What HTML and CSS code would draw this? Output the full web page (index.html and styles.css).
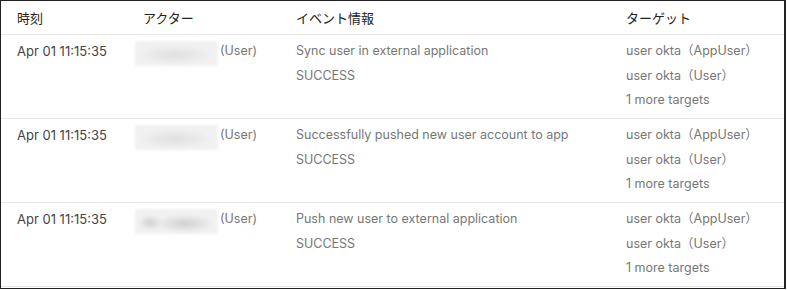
FILE: index.html
```html
<!DOCTYPE html>
<html lang="ja">
<head>
    <meta charset="UTF-8">
    <meta name="viewport" content="width=device-width, initial-scale=1.0">
    <link rel="stylesheet" href="styles.css">
    <title>イベントログ</title>
</head>
<body>
    <div class="log-table">
        <div class="log-row log-head">
            <div class="cell">時刻</div>
            <div class="cell">アクター</div>
            <div class="cell">イベント情報</div>
            <div class="cell">ターゲット</div>
        </div>

        <div class="log-row">
            <div class="cell time">Apr 01 11:15:35</div>
            <div class="cell actor">
                <span class="masked"></span>
                <span class="kind">(User)</span>
            </div>
            <div class="cell event">
                <div>Sync user in external application</div>
                <div>SUCCESS</div>
            </div>
            <div class="cell target">
                <div>user okta（AppUser）</div>
                <div>user okta（User）</div>
                <div>1 more targets</div>
            </div>
        </div>

        <div class="log-row">
            <div class="cell time">Apr 01 11:15:35</div>
            <div class="cell actor">
                <span class="masked"></span>
                <span class="kind">(User)</span>
            </div>
            <div class="cell event">
                <div>Successfully pushed new user account to app</div>
                <div>SUCCESS</div>
            </div>
            <div class="cell target">
                <div>user okta（AppUser）</div>
                <div>user okta（User）</div>
                <div>1 more targets</div>
            </div>
        </div>

        <div class="log-row">
            <div class="cell time">Apr 01 11:15:35</div>
            <div class="cell actor">
                <span class="masked strong"></span>
                <span class="kind">(User)</span>
            </div>
            <div class="cell event">
                <div>Push new user to external application</div>
                <div>SUCCESS</div>
            </div>
            <div class="cell target">
                <div>user okta（AppUser）</div>
                <div>user okta（User）</div>
                <div>1 more targets</div>
            </div>
        </div>
    </div>
</body>
</html>
```

FILE: styles.css
```css
body {
    margin: 0;
    background: #fff;
    font-family: Inter, "Noto Sans CJK JP", sans-serif;
    font-size: 13px;
    color: #333;
}

.log-table {
    box-sizing: border-box;
    width: 786px;
    height: 289px;
    border: 1px solid #222;
    border-right-width: 2px;
}

.log-row {
    display: grid;
    grid-template-columns: 126px 153px 330px 1fr;
    height: 83px;
    border-bottom: 1px solid #e6e6e6;
}

.log-head {
    height: 33px;
    align-items: center;
    color: #222;
}

.cell {
    padding-left: 16px;
}

.log-row:not(.log-head) .cell {
    padding-top: 4px;
    line-height: 24.5px;
}

.time {
    color: #444;
}

.actor {
    display: flex;
    align-items: flex-start;
}

/* blurred-out actor name */
.masked {
    display: inline-block;
    width: 83px;
    height: 25px;
    margin: 2px 2px 0 -8px;
    background:
        radial-gradient(ellipse 38px 10px at 48% 55%, rgba(215, 215, 215, 0.7), transparent),
        #f1f1f1;
    filter: blur(1.5px);
}

.masked.strong {
    background:
        radial-gradient(ellipse 12px 8px at 18% 55%, rgba(185, 185, 185, 0.6), transparent),
        radial-gradient(ellipse 30px 9px at 60% 58%, rgba(185, 185, 185, 0.6), transparent),
        #f1f1f1;
}

.kind,
.event,
.target {
    color: #777;
    font-size: 12.5px;
}
```
